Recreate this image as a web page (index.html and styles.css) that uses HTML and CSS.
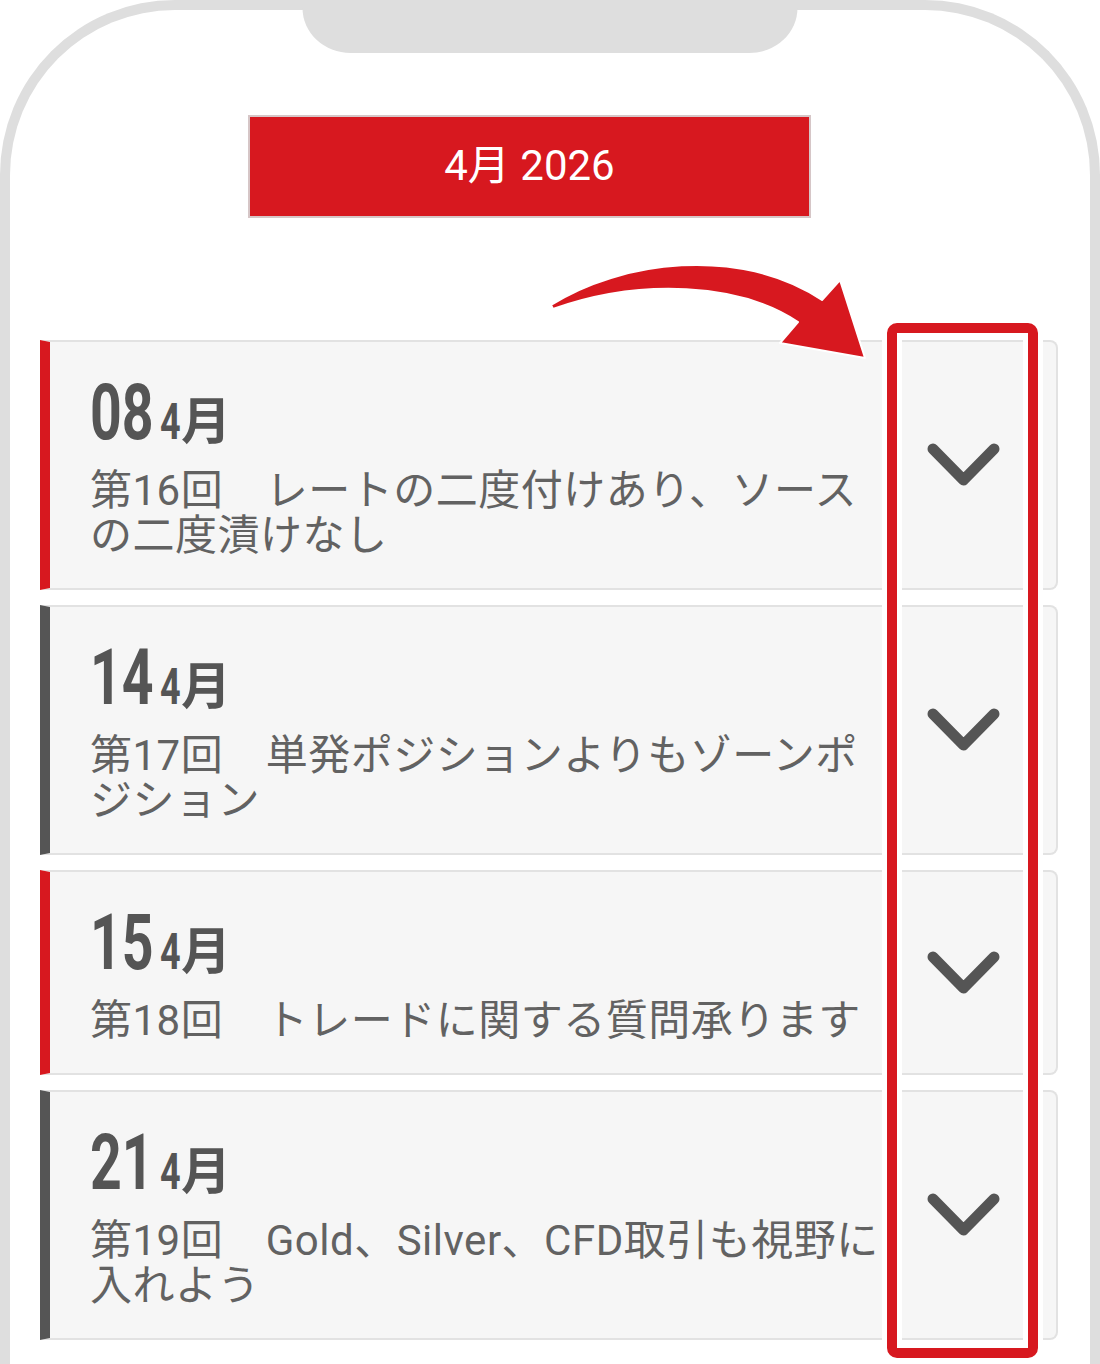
FILE: index.html
```html
<!DOCTYPE html>
<html lang="ja">
<head>
  <meta charset="UTF-8">
  <meta name="viewport" content="width=device-width, initial-scale=1.0">
  <title>セミナー日程</title>
  <link rel="stylesheet" href="styles.css">
</head>
<body>
  <div class="phone">
    <div class="notch"></div>

    <div class="month-banner">4月 2026</div>

    <div class="schedule">
      <svg class="hint-arrow" width="340" height="110" viewBox="540 255 340 110">
        <path d="M551,305 C620,261 740,245 822,300 L840,280 L865,358 L780,343 L798,322 C740,283 640,278 553,309 Z"
              fill="#d7181f" stroke="#fff" stroke-width="2" stroke-linejoin="round"/>
      </svg>

      <div class="event event-red">
        <div class="event-body">
          <div class="event-date"><span class="day">08</span><span class="month"><span class="month-num">4</span>月</span></div>
          <p class="event-title">第16回　レートの二度付けあり、ソースの二度漬けなし</p>
        </div>
        <div class="event-toggle">
          <svg width="73" height="44" viewBox="0 0 73 44"><polyline points="6,6 36.5,37 67,6"/></svg>
        </div>
      </div>

      <div class="event event-dark">
        <div class="event-body">
          <div class="event-date"><span class="day">14</span><span class="month"><span class="month-num">4</span>月</span></div>
          <p class="event-title">第17回　単発ポジションよりもゾーンポジション</p>
        </div>
        <div class="event-toggle">
          <svg width="73" height="44" viewBox="0 0 73 44"><polyline points="6,6 36.5,37 67,6"/></svg>
        </div>
      </div>

      <div class="event event-red">
        <div class="event-body">
          <div class="event-date"><span class="day">15</span><span class="month"><span class="month-num">4</span>月</span></div>
          <p class="event-title">第18回　トレードに関する質問承ります</p>
        </div>
        <div class="event-toggle">
          <svg width="73" height="44" viewBox="0 0 73 44"><polyline points="6,6 36.5,37 67,6"/></svg>
        </div>
      </div>

      <div class="event event-dark">
        <div class="event-body">
          <div class="event-date"><span class="day">21</span><span class="month"><span class="month-num">4</span>月</span></div>
          <p class="event-title">第19回　Gold、Silver、CFD取引も視野に入れよう</p>
        </div>
        <div class="event-toggle">
          <svg width="73" height="44" viewBox="0 0 73 44"><polyline points="6,6 36.5,37 67,6"/></svg>
        </div>
      </div>

      <div class="toggle-highlight"></div>
    </div>
  </div>
</body>
</html>
```

FILE: styles.css
```css
:root {
  --red: #d7181f;
  --dark: #555555;
  --frame: #dedede;
  --card-bg: #f6f6f6;
  --card-border: #e2e2e2;
}

* {
  box-sizing: border-box;
}

body {
  margin: 0;
  background: #fff;
  font-family: Roboto, "Noto Sans CJK JP", sans-serif;
  overflow: hidden;
}

.phone {
  position: relative;
  width: 1100px;
  min-height: 100vh;
  border: 10px solid var(--frame);
  border-bottom: none;
  border-radius: 175px 175px 0 0;
  padding: 105px 32px 40px 30px;
}

.notch {
  position: absolute;
  top: -10px;
  left: 50%;
  width: 495px;
  height: 53px;
  transform: translateX(-50%);
  background: var(--frame);
  border-radius: 0 0 48px 48px / 0 0 45px 45px;
}

.month-banner {
  width: 563px;
  height: 103px;
  margin-left: 208px;
  padding-bottom: 10px;
  display: flex;
  align-items: center;
  justify-content: center;
  background: var(--red);
  border: 2px solid #d6c6c7;
  color: #fff;
  font-size: 42px;
}

.schedule {
  position: relative;
  margin-top: 122px;
  display: flex;
  flex-direction: column;
  gap: 15px;
}

.hint-arrow {
  position: absolute;
  left: 500px;
  top: -85px;
}

.event {
  display: flex;
  background: var(--card-bg);
  border: 2px solid var(--card-border);
  border-left: 10px solid var(--dark);
  border-radius: 0 8px 8px 0;
  padding-right: 15px;
}

.event-red {
  border-left-color: var(--red);
}

.event-dark {
  border-left-color: var(--dark);
}

.event-body {
  flex: 1;
  padding: 41px 0 30px 40px;
}

.event-date {
  line-height: 60px;
  color: var(--dark);
  font-weight: 700;
  white-space: nowrap;
}

.day {
  display: inline-block;
  width: 63px;
  font-size: 77px;
  transform: scaleX(0.72);
  transform-origin: left;
}

.month {
  margin-left: 7px;
  font-size: 50px;
}

.month-num {
  display: inline-block;
  width: 21px;
  transform: scaleX(0.72);
  transform-origin: left;
}

.event-title {
  margin: 4px 0 0;
  font-size: 42px;
  line-height: 45px;
  letter-spacing: 0.5px;
  color: #626262;
}

.event-toggle {
  width: 156px;
  flex-shrink: 0;
  display: flex;
  align-items: center;
  justify-content: center;
}

.event-toggle polyline {
  fill: none;
  stroke: var(--dark);
  stroke-width: 11;
  stroke-linecap: round;
  stroke-linejoin: round;
}

.toggle-highlight {
  position: absolute;
  top: -17px;
  bottom: -18px;
  right: 20px;
  width: 151px;
  border: 10px solid var(--red);
  border-radius: 10px;
  box-shadow: 0 0 0 5px #fff, inset 0 0 0 5px #fff;
}
```
